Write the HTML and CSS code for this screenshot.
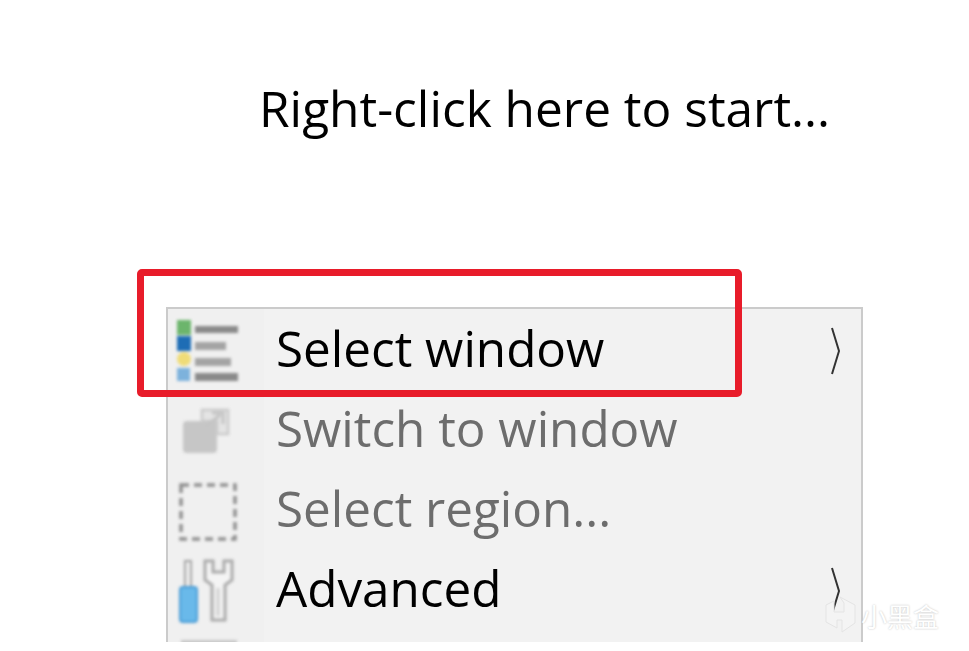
FILE: index.html
```html
<!DOCTYPE html>
<html lang="en">
<head>
    <meta charset="UTF-8">
    <title>Right-click menu</title>
    <link rel="stylesheet" href="styles.css">
</head>
<body>
    <p class="hint">Right-click here to start...</p>

    <div class="menu">
        <div class="menu-row">
            <span class="menu-icon">
                <svg width="66" height="66" viewBox="0 0 66 66" class="soft">
                    <rect x="3" y="2" width="14" height="15" fill="#6cb56c"/>
                    <rect x="3" y="18" width="14" height="15" fill="#1e6db5"/>
                    <circle cx="10" cy="41" r="7" fill="#efdc78"/>
                    <rect x="3" y="50" width="13" height="13" fill="#7db2dc"/>
                    <rect x="21" y="8" width="43" height="7" fill="#8a8a8a"/>
                    <rect x="21" y="24" width="31" height="8" fill="#a4a4a4"/>
                    <rect x="21" y="40" width="36" height="8" fill="#a4a4a4"/>
                    <rect x="21" y="55" width="43" height="8" fill="#8a8a8a"/>
                </svg>
            </span>
            <span class="menu-label">Select window</span>
            <svg class="arrow" width="10" height="48" viewBox="0 0 10 48"><path d="M1 1 L8 24 L1 47"/></svg>
        </div>
        <div class="menu-row disabled">
            <span class="menu-icon">
                <svg width="66" height="66" viewBox="0 0 66 66" class="soft">
                    <rect x="9" y="23" width="34" height="32" rx="4" fill="#c6c6c6"/>
                    <path d="M28 12 H54 V36 H43 V23 H28 Z" fill="#e4e4e4" stroke="#cacaca" stroke-width="2.5"/>
                    <path d="M32 28 L46 17 M38 15 H49 V26" fill="none" stroke="#c4c4c4" stroke-width="3"/>
                </svg>
            </span>
            <span class="menu-label">Switch to window</span>
        </div>
        <div class="menu-row disabled">
            <span class="menu-icon">
                <svg width="66" height="66" viewBox="0 0 66 66" class="soft">
                    <rect x="7" y="7" width="54" height="54" fill="none" stroke="#8f8f8f" stroke-width="3.5" stroke-dasharray="8 5"/>
                </svg>
            </span>
            <span class="menu-label">Select region...</span>
        </div>
        <div class="menu-row">
            <span class="menu-icon">
                <svg width="66" height="66" viewBox="0 0 66 66" class="soft">
                    <path d="M11 3 H17 V29 H11 Z" fill="#efefef" stroke="#a4a4a4" stroke-width="2"/>
                    <rect x="6" y="29" width="17" height="35" rx="3" fill="#69b9ea" stroke="#4a9cd6" stroke-width="2"/>
                    <path d="M31 3 H39 V14 H50 V3 H58 V22 L51 27 V62 H38 V27 L31 22 Z" fill="#f4f4f4" stroke="#aaaaaa" stroke-width="3"/>
                    <path d="M44 30 V58" stroke="#cfcfcf" stroke-width="3"/>
                </svg>
            </span>
            <span class="menu-label">Advanced</span>
            <svg class="arrow" width="10" height="48" viewBox="0 0 10 48"><path d="M1 1 L8 24 L1 47"/></svg>
        </div>
        <div class="menu-row">
            <span class="menu-icon">
                <svg width="66" height="66" viewBox="0 0 66 66" class="soft">
                    <rect x="7" y="2" width="56" height="30" fill="#c8c8c8"/>
                </svg>
            </span>
        </div>
    </div>

    <div class="highlight"></div>

    <div class="watermark">
        <svg width="32" height="38" viewBox="0 0 32 38"><path d="M16 1 L31 9 V27 L18 36 V24 H13 V32 L2 26 V9 L10 5 V16 H20 V7 Z" fill="#f4f4f4" stroke="#e4e4e4"/></svg>
        <span>小黑盒</span>
    </div>
</body>
</html>
```

FILE: styles.css
```css
html, body {
    height: 100%;
}

body {
    margin: 0;
    background-color: #fff;
    position: relative;
    overflow: hidden;
    font-family: 'Open Sans', 'Noto Sans', sans-serif;
}

.hint {
    margin: 0;
    padding: 74px 0 0 259px;
    font-size: 49.6px;
    line-height: 68px;
    color: #000;
    white-space: nowrap;
}

.menu {
    margin: 165px 0 0 166px;
    width: 693px;
    height: 331px;
    padding-top: 2px;
    background: linear-gradient(to right, #f0f0f0 96px, #f2f2f2 96px);
    border: 2px solid #cbcbcb;
    border-bottom: none;
    overflow: hidden;
    box-sizing: content-box;
}

.menu-row {
    display: flex;
    align-items: center;
    height: 80px;
    color: #000;
}

.menu-row.disabled {
    color: #6d6d6d;
}

.menu-icon {
    display: flex;
    width: 108px;
    padding-left: 6px;
    box-sizing: border-box;
}

.soft {
    filter: blur(1.5px);
}

.menu-label {
    flex: 1;
    padding-bottom: 6px;
    font-size: 49.4px;
    line-height: 68px;
    white-space: nowrap;
}

.arrow {
    margin-right: 20px;
}

.arrow path {
    fill: none;
    stroke: #333;
    stroke-width: 2;
}

.highlight {
    position: absolute;
    left: 137px;
    top: 269px;
    width: 605px;
    height: 128px;
    box-sizing: border-box;
    border: 7px solid #e81c2a;
    border-radius: 5px;
}

.watermark {
    position: absolute;
    left: 824px;
    top: 596px;
    display: flex;
    align-items: center;
    gap: 5px;
}

.watermark span {
    font-family: 'Noto Sans CJK SC', sans-serif;
    font-size: 26px;
    color: #fff;
    text-shadow: 0 0 2px #bdbdbd;
}
```
